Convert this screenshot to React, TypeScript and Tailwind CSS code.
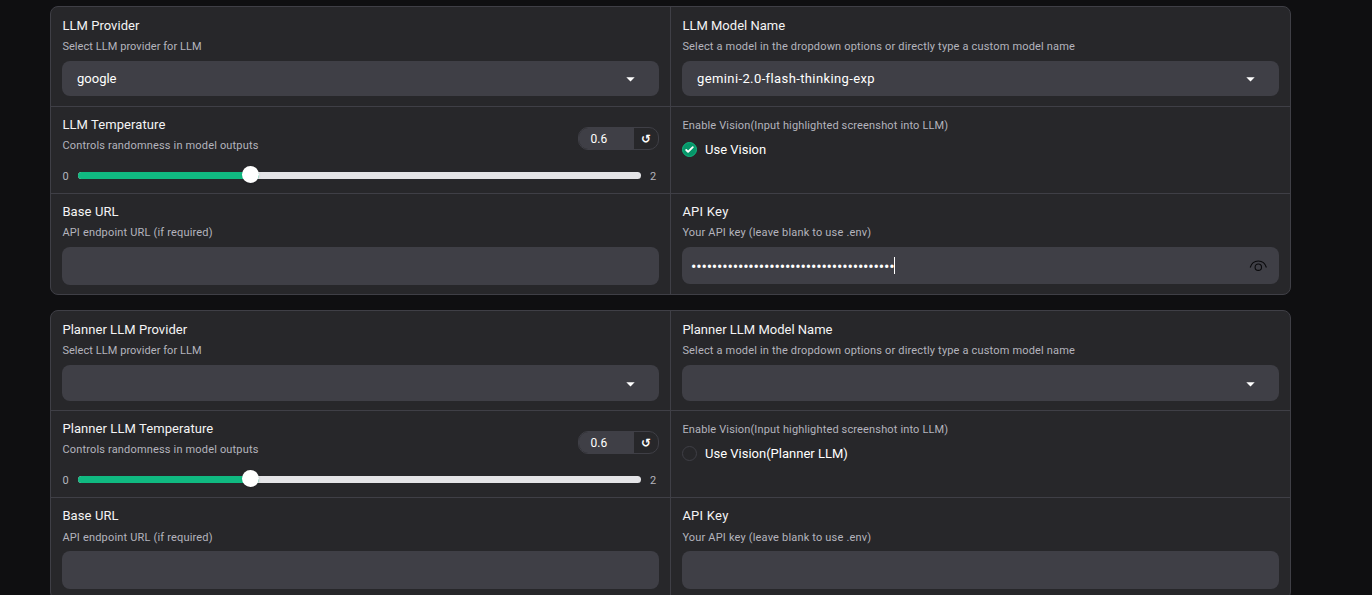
import React from "react";

const FONT = "font-['Roboto','Noto_Sans',sans-serif]";

function Title({ children, className = "tracking-[0.05px]" }: { children: React.ReactNode; className?: string }) {
  return <div className={`h-5 pl-[0.4px] text-[13px] leading-5 whitespace-nowrap text-[#f4f4f5] ${className}`}>{children}</div>;
}

function Info({ children, className = "mt-[3px] tracking-[0.17px]" }: { children: React.ReactNode; className?: string }) {
  return <div className={`h-4 pl-[0.4px] text-[11px] leading-4 whitespace-nowrap text-[#b4b4bd] ${className}`}>{children}</div>;
}

function Caret() {
  return (
    <svg className="mt-[2px] h-[5px] w-[9px]" viewBox="0 0 9 5">
      <path d="M0.3 0.3h8.4L4.5 4.6z" fill="#fff" />
    </svg>
  );
}

function Dropdown({ value = "", className = "h-[35px]" }: { value?: string; className?: string }) {
  return (
    <div className={`mt-[6px] flex items-center justify-between rounded-lg bg-[#3f3f46] pr-6 pl-[15px] text-[13px] text-white ${className}`}>
      <span>{value}</span>
      <Caret />
    </div>
  );
}

function Slider() {
  return (
    <div className="flex h-[17px] items-center text-[11px] text-[#b4b4bd]">
      <span className="w-4 pt-px pl-[0.5px]">0</span>
      <div className="mb-[2px] flex h-[7px] w-[563px] items-center rounded-full bg-[#e4e4e7]">
        <div className="flex h-[7px] w-[181px] items-center justify-end rounded-full bg-[#10b981]">
          <div className="mb-0.5 h-[17px] w-[17px] shrink-0 rounded-full bg-white shadow-sm" />
        </div>
      </div>
      <span className="ml-[9px] pt-px">2</span>
    </div>
  );
}

function NumberBox() {
  return (
    <div className="mt-[12px] flex h-[23px] w-[81px] overflow-hidden rounded-[10px] border border-[#3f3f46] text-[12px] text-white">
      <div className="flex w-[55px] items-center bg-[#3f3f46] pt-px pl-[11.5px]">0.6</div>
      <div className="flex flex-1 items-center justify-center font-['DejaVu_Sans',sans-serif] text-[12px] font-bold">↺</div>
    </div>
  );
}

function Checkbox({ checked }: { checked: boolean }) {
  return checked ? (
    <div className="flex h-[15px] w-[15px] items-center justify-center rounded-full border border-[#10b981] bg-[#059669]">
      <svg className="h-[15px] w-[15px] shrink-0" viewBox="0 0 16 16" fill="#fff">
        <path d="M12.207 4.793a1 1 0 010 1.414l-5 5a1 1 0 01-1.414 0l-2-2a1 1 0 011.414-1.414L6.5 9.086l4.293-4.293a1 1 0 011.414 0z" />
      </svg>
    </div>
  ) : (
    <div className="h-[15px] w-[15px] rounded-full border border-[#3f3f46]" />
  );
}

function EyeIcon() {
  return (
    <svg className="h-[12px] w-[18px]" viewBox="0 0 18 12" fill="none" stroke="#09090b" strokeWidth="1.1">
      <path d="M1.200 7.500C2.400 3.400 5.400 1 9.300 1S16.200 3.400 17.400 7.500" />
      <circle cx="9.300" cy="7.200" r="3.200" />
    </svg>
  );
}

function Panel({ planner }: { planner: boolean }) {
  const cell = "flex flex-col px-[11px] border-[#3f3f46]";
  const dropdownHeight = planner ? "h-[36px]" : "h-[35px]";
  const lastInfo = planner ? "mt-[4px] mb-[5px] tracking-[0.18px]" : "mt-[3px] mb-[6px] tracking-[0.18px]";
  return (
    <section className={`grid shrink-0 grid-cols-[620px_619px] overflow-hidden rounded-lg border border-[#3f3f46] bg-[#27272a] ${planner ? "grid-rows-[100px_87px_101px]" : "grid-rows-[100px_87px_100px]"}`}>
      <div className={`${cell} border-r border-b pt-[9px]`}>
        <Title>{planner ? "Planner LLM Provider" : "LLM Provider"}</Title>
        <Info className="mt-[3px] tracking-[0.06px]">Select LLM provider for LLM</Info>
        <Dropdown value={planner ? "" : "google"} className={dropdownHeight} />
      </div>
      <div className={`${cell} border-b pt-[9px]`}>
        <Title className="tracking-[0.01px]">{planner ? "Planner LLM Model Name" : "LLM Model Name"}</Title>
        <Info>Select a model in the dropdown options or directly type a custom model name</Info>
        <Dropdown value={planner ? "" : "gemini-2.0-flash-thinking-exp"} className={`tracking-[0.39px] ${dropdownHeight}`} />
      </div>
      <div className={`${cell} border-r border-b pt-2`}>
        <div className="flex h-[53px] justify-between">
          <div>
            <Title className="tracking-[0.08px]">{planner ? "Planner LLM Temperature" : "LLM Temperature"}</Title>
            <Info>Controls randomness in model outputs</Info>
          </div>
          <NumberBox />
        </div>
        <Slider />
      </div>
      <div className={`${cell} border-b pt-[11px]`}>
        <Info className="tracking-[0.15px]">Enable Vision(Input highlighted screenshot into LLM)</Info>
        <div className="mt-[5px] flex h-[21px] items-center gap-2 text-[13px] text-white">
          <Checkbox checked={!planner} />
          <span className="pt-px">{planner ? "Use Vision(Planner LLM)" : "Use Vision"}</span>
        </div>
      </div>
      <div className={`${cell} border-r pt-2`}>
        <Title className="tracking-[0.1px]">Base URL</Title>
        <Info className={lastInfo}>API endpoint URL (if required)</Info>
        <div className="h-[38px] rounded-lg bg-[#3f3f46]" />
      </div>
      <div className={`${cell} pt-2`}>
        <Title className="tracking-[0.25px]">API Key</Title>
        <Info className={lastInfo}>Your API key (leave blank to use .env)</Info>
        <div className={`flex items-center justify-between rounded-lg bg-[#3f3f46] pr-3 pl-[9px] ${planner ? "h-[38px]" : "h-[37px]"}`}>
          {!planner && (
            <>
              <span className="flex items-center text-[16px] text-white">
                <span className="pt-[2px] tracking-[-0.183px]">{"•".repeat(39)}</span>
                <span className="h-[17px] w-px bg-white" />
              </span>
              <EyeIcon />
            </>
          )}
        </div>
      </div>
    </section>
  );
}

export default function App() {
  return (
    <main className={`flex h-[595px] w-[1372px] flex-col gap-[15px] overflow-hidden bg-[#0f0f11] pt-[6px] pr-[81px] pl-[50px] ${FONT}`}>
      <Panel planner={false} />
      <Panel planner />
    </main>
  );
}
